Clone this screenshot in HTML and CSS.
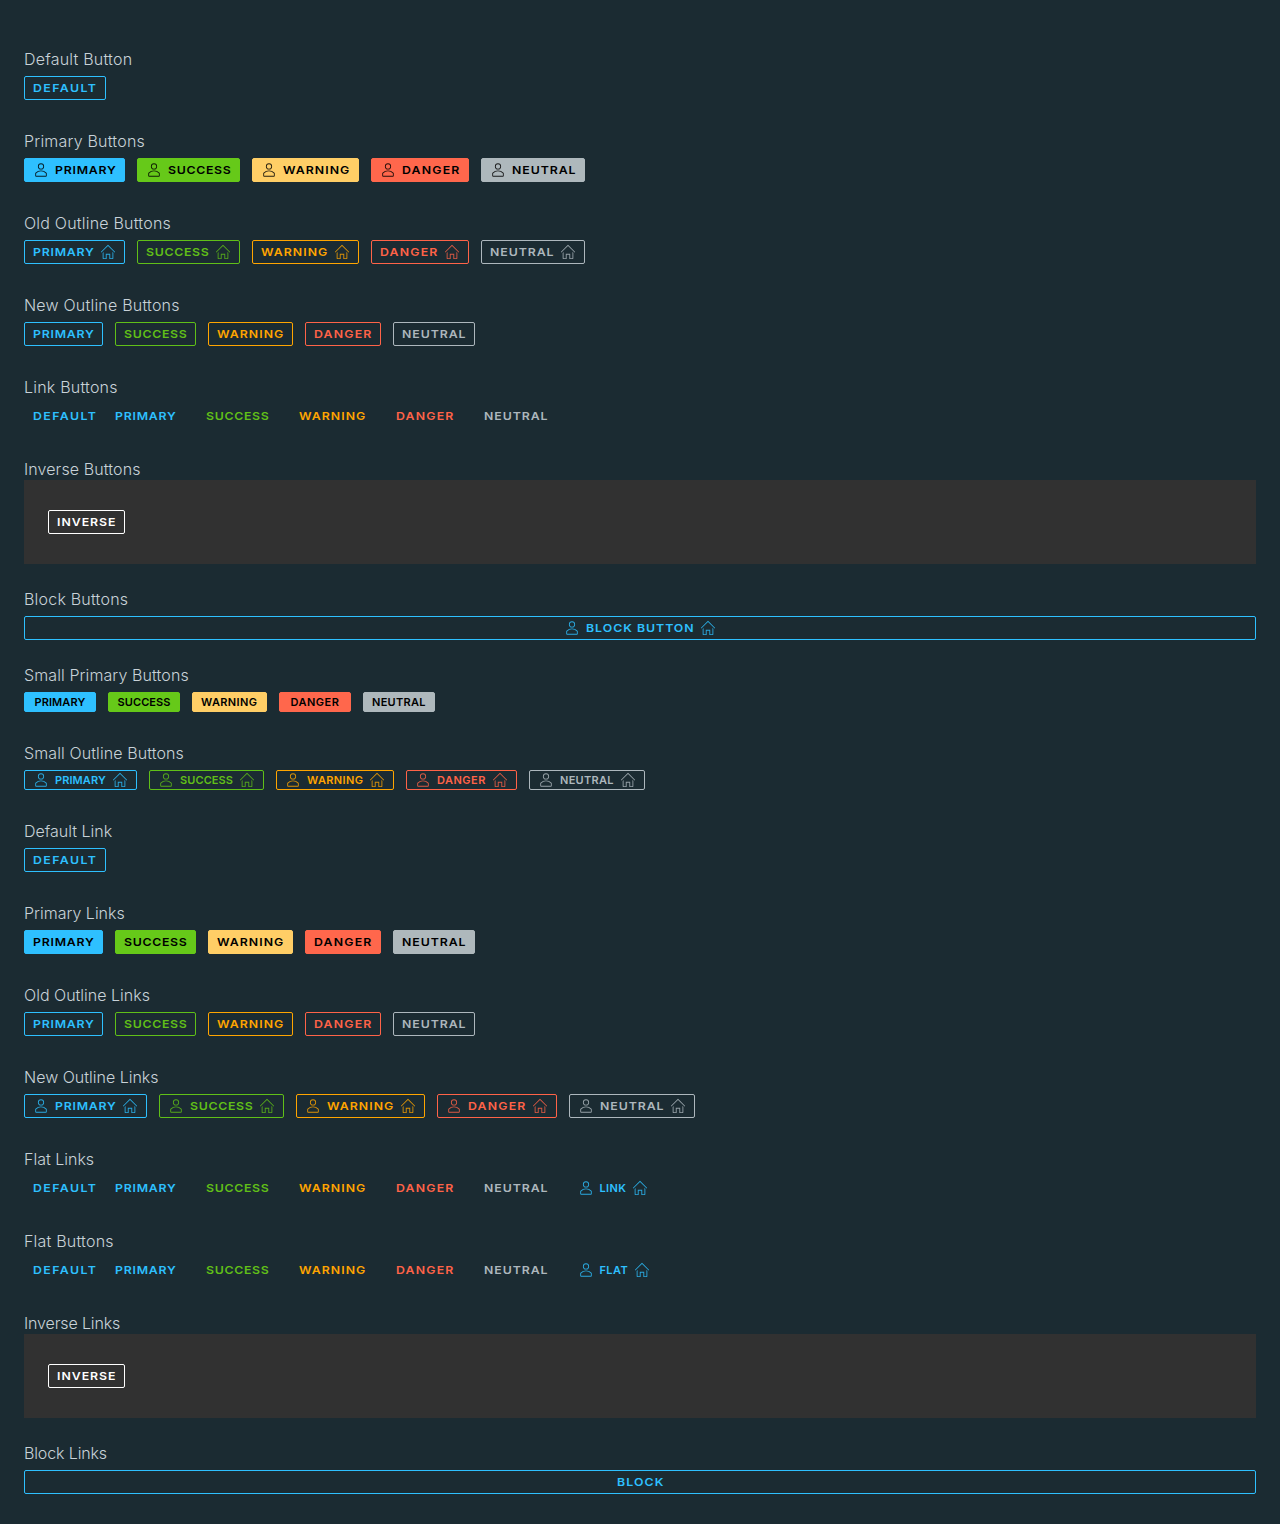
FILE: index.html
```html
<!DOCTYPE html>
<html lang="en">
<head>
<meta charset="utf-8">
<title>Buttons</title>
<link rel="stylesheet" href="styles.css">
</head>
<body>
<svg class="sprite" aria-hidden="true">
  <symbol id="user" viewBox="0 0 36 36"><path d="M18,17a7,7,0,1,0-7-7A7,7,0,0,0,18,17ZM18,5a5,5,0,1,1-5,5A5,5,0,0,1,18,5Z"/><path d="M30.47,24.37a17.16,17.16,0,0,0-24.93,0A2,2,0,0,0,5,25.74V31a2,2,0,0,0,2,2H29a2,2,0,0,0,2-2V25.74A2,2,0,0,0,30.47,24.37ZM29,31H7V25.73a15.17,15.17,0,0,1,22,0h0Z"/></symbol>
  <symbol id="home" viewBox="0 0 36 36"><path d="M33.71,17.29l-15-15a1,1,0,0,0-1.41,0l-15,15a1,1,0,0,0,1.41,1.41L18,4.41,32.29,18.71a1,1,0,0,0,1.41-1.41Z"/><path d="M28,32h-5V22H13V32H8V18L6,20V32a2,2,0,0,0,2,2h7V24h6V34h7a2,2,0,0,0,2-2V19.76l-2-2Z"/></symbol>
</svg>
<main>
<section>
  <h4>Default Button</h4>
  <div class="row"><button class="btn"><span class="t default">Default</span></button></div>
</section>
<section>
  <h4>Primary Buttons</h4>
  <div class="row solid">
    <button class="btn c-primary"><svg><use href="#user"/></svg><span class="t primary">Primary</span></button>
    <button class="btn c-success"><svg><use href="#user"/></svg><span class="t success">Success</span></button>
    <button class="btn c-warning"><svg><use href="#user"/></svg><span class="t warning">Warning</span></button>
    <button class="btn c-danger"><svg><use href="#user"/></svg><span class="t danger">Danger</span></button>
    <button class="btn c-neutral"><svg><use href="#user"/></svg><span class="t neutral">Neutral</span></button>
  </div>
</section>
<section>
  <h4>Old Outline Buttons</h4>
  <div class="row">
    <button class="btn c-primary"><span class="t primary">Primary</span><svg><use href="#home"/></svg></button>
    <button class="btn c-success"><span class="t success">Success</span><svg><use href="#home"/></svg></button>
    <button class="btn c-warning"><span class="t warning">Warning</span><svg><use href="#home"/></svg></button>
    <button class="btn c-danger"><span class="t danger">Danger</span><svg><use href="#home"/></svg></button>
    <button class="btn c-neutral"><span class="t neutral">Neutral</span><svg><use href="#home"/></svg></button>
  </div>
</section>
<section>
  <h4>New Outline Buttons</h4>
  <div class="row">
    <button class="btn c-primary"><span class="t primary">Primary</span></button>
    <button class="btn c-success"><span class="t success">Success</span></button>
    <button class="btn c-warning"><span class="t warning">Warning</span></button>
    <button class="btn c-danger"><span class="t danger">Danger</span></button>
    <button class="btn c-neutral"><span class="t neutral">Neutral</span></button>
  </div>
</section>
<section>
  <h4>Link Buttons</h4>
  <div class="row flat">
    <button class="btn"><span class="t default">Default</span></button>
    <button class="btn c-primary"><span class="t primary">Primary</span></button>
    <button class="btn c-success"><span class="t success">Success</span></button>
    <button class="btn c-warning"><span class="t warning">Warning</span></button>
    <button class="btn c-danger"><span class="t danger">Danger</span></button>
    <button class="btn c-neutral"><span class="t neutral">Neutral</span></button>
  </div>
</section>
<section class="tight snug">
  <h4>Inverse Buttons</h4>
  <div class="panel"><button class="btn c-inverse"><span class="t inverse">Inverse</span></button></div>
</section>
<section class="tight">
  <h4>Block Buttons</h4>
  <button class="btn block"><svg><use href="#user"/></svg><span class="t block-button">Block Button</span><svg><use href="#home"/></svg></button>
</section>
<section class="snug">
  <h4>Small Primary Buttons</h4>
  <div class="row solid small">
    <button class="btn c-primary"><span class="t primary">Primary</span></button>
    <button class="btn c-success"><span class="t success">Success</span></button>
    <button class="btn c-warning"><span class="t warning">Warning</span></button>
    <button class="btn c-danger"><span class="t danger">Danger</span></button>
    <button class="btn c-neutral"><span class="t neutral">Neutral</span></button>
  </div>
</section>
<section class="snug">
  <h4>Small Outline Buttons</h4>
  <div class="row small">
    <button class="btn c-primary"><svg><use href="#user"/></svg><span class="t primary">Primary</span><svg><use href="#home"/></svg></button>
    <button class="btn c-success"><svg><use href="#user"/></svg><span class="t success">Success</span><svg><use href="#home"/></svg></button>
    <button class="btn c-warning"><svg><use href="#user"/></svg><span class="t warning">Warning</span><svg><use href="#home"/></svg></button>
    <button class="btn c-danger"><svg><use href="#user"/></svg><span class="t danger">Danger</span><svg><use href="#home"/></svg></button>
    <button class="btn c-neutral"><svg><use href="#user"/></svg><span class="t neutral">Neutral</span><svg><use href="#home"/></svg></button>
  </div>
</section>
<section class="links">
  <h4>Default Link</h4>
  <div class="row"><a class="btn" href="#"><span class="t default">Default</span></a></div>
</section>
<section class="links">
  <h4>Primary Links</h4>
  <div class="row solid">
    <a class="btn c-primary" href="#"><span class="t primary">Primary</span></a>
    <a class="btn c-success" href="#"><span class="t success">Success</span></a>
    <a class="btn c-warning" href="#"><span class="t warning">Warning</span></a>
    <a class="btn c-danger" href="#"><span class="t danger">Danger</span></a>
    <a class="btn c-neutral" href="#"><span class="t neutral">Neutral</span></a>
  </div>
</section>
<section class="links">
  <h4>Old Outline Links</h4>
  <div class="row">
    <a class="btn c-primary" href="#"><span class="t primary">Primary</span></a>
    <a class="btn c-success" href="#"><span class="t success">Success</span></a>
    <a class="btn c-warning" href="#"><span class="t warning">Warning</span></a>
    <a class="btn c-danger" href="#"><span class="t danger">Danger</span></a>
    <a class="btn c-neutral" href="#"><span class="t neutral">Neutral</span></a>
  </div>
</section>
<section class="links">
  <h4>New Outline Links</h4>
  <div class="row">
    <a class="btn c-primary" href="#"><svg><use href="#user"/></svg><span class="t primary">Primary</span><svg><use href="#home"/></svg></a>
    <a class="btn c-success" href="#"><svg><use href="#user"/></svg><span class="t success">Success</span><svg><use href="#home"/></svg></a>
    <a class="btn c-warning" href="#"><svg><use href="#user"/></svg><span class="t warning">Warning</span><svg><use href="#home"/></svg></a>
    <a class="btn c-danger" href="#"><svg><use href="#user"/></svg><span class="t danger">Danger</span><svg><use href="#home"/></svg></a>
    <a class="btn c-neutral" href="#"><svg><use href="#user"/></svg><span class="t neutral">Neutral</span><svg><use href="#home"/></svg></a>
  </div>
</section>
<section class="links">
  <h4>Flat Links</h4>
  <div class="row flat">
    <a class="btn" href="#"><span class="t default">Default</span></a>
    <a class="btn c-primary" href="#"><span class="t primary">Primary</span></a>
    <a class="btn c-success" href="#"><span class="t success">Success</span></a>
    <a class="btn c-warning" href="#"><span class="t warning">Warning</span></a>
    <a class="btn c-danger" href="#"><span class="t danger">Danger</span></a>
    <a class="btn c-neutral" href="#"><span class="t neutral">Neutral</span></a>
    <a class="btn" href="#"><svg><use href="#user"/></svg><span class="t link">Link</span><svg><use href="#home"/></svg></a>
  </div>
</section>
<section>
  <h4>Flat Buttons</h4>
  <div class="row flat">
    <button class="btn"><span class="t default">Default</span></button>
    <button class="btn c-primary"><span class="t primary">Primary</span></button>
    <button class="btn c-success"><span class="t success">Success</span></button>
    <button class="btn c-warning"><span class="t warning">Warning</span></button>
    <button class="btn c-danger"><span class="t danger">Danger</span></button>
    <button class="btn c-neutral"><span class="t neutral">Neutral</span></button>
    <button class="btn"><svg><use href="#user"/></svg><span class="t flat-label">Flat</span><svg><use href="#home"/></svg></button>
  </div>
</section>
<section class="tight narrow">
  <h4>Inverse Links</h4>
  <div class="panel"><a class="btn c-inverse" href="#"><span class="t inverse">Inverse</span></a></div>
</section>
<section class="narrow">
  <h4>Block Links</h4>
  <a class="btn block" href="#"><span class="t block-link">Block</span></a>
</section>
</main>
</body>
</html>
```
FILE: styles.css
```css
* { box-sizing: border-box; }

body {
  margin: 0;
  background: #1b2b32;
  font-family: Inter, "Liberation Sans", sans-serif;
}

.sprite { display: none; }

main { padding: 47px 24px 0; }

section { padding-bottom: 29px; }
section.tight { padding-bottom: 23px; }

h4 {
  margin: 0 0 5px;
  color: #c8d2d8;
  font-size: 16px;
  font-weight: 300;
  line-height: 24px;
  letter-spacing: 0.21px;
}
.snug h4 { letter-spacing: 0.1px; }
.links h4 { letter-spacing: 0; }
.narrow h4 { letter-spacing: -0.13px; }

.row { display: flex; gap: 12px; }
.flat .btn:first-child { margin-right: -12.5px; }

.btn {
  --c: #2ec0ff;
  --fill: #2ec0ff;
  display: flex;
  align-items: center;
  justify-content: center;
  gap: 6px;
  height: 24px;
  padding: 0 8px;
  border: 1px solid var(--c);
  border-radius: 2px;
  background: none;
  color: var(--c);
  font: 600 11px/22px Inter, "Liberation Sans", sans-serif;
  text-decoration: none;
  text-transform: uppercase;
  white-space: nowrap;
}
.btn svg {
  flex: none;
  width: 16px;
  height: 16px;
  fill: currentColor;
  opacity: 0.85;
}

.c-success { --c: #60bf18; --fill: #66c919; }
.c-warning { --c: #ffa500; --fill: #ffce66; }
.c-danger { --c: #ff6348; --fill: #ff674c; }
.c-neutral { --c: #adb7bd; --fill: #aeb8bc; }
.c-inverse { --c: #fff; }

.solid .btn {
  border-color: var(--fill);
  background: var(--fill);
  color: #000;
}
.flat .btn { border-color: transparent; }
.block { width: 100%; }

.panel {
  display: flex;
  align-items: center;
  height: 84px;
  margin-top: -6px;
  padding: 0 24px;
  background: #313131;
}
section.tight:has(.panel) { padding-bottom: 23px; }

/* Label boxes and tracking; regular-size labels are set extended */
.t {
  flex: none;
  text-align: left;
  transform: scaleX(1.12);
  transform-origin: left center;
}
.default { width: 64px; letter-spacing: 1.27px; }
.primary { width: 61px; letter-spacing: 0.68px; }
.success { width: 63px; letter-spacing: 0.6px; }
.warning { width: 67px; letter-spacing: 0.93px; }
.danger { width: 58px; letter-spacing: 1.05px; }
.neutral { width: 64px; letter-spacing: 0.83px; }
.inverse { width: 59px; letter-spacing: 0.87px; }
.block-button { width: 108px; letter-spacing: 0.87px; }
.block-link { width: 47px; letter-spacing: 0.97px; }
.link { width: 26.5px; letter-spacing: 0.4px; transform: none; }
.flat-label { width: 28.5px; letter-spacing: 0.4px; transform: none; }

.small .btn { height: 20px; min-width: 72px; line-height: 18px; }
.small .t { transform: none; }
.small .primary { width: 51px; letter-spacing: 0.1px; }
.small .success { width: 53px; letter-spacing: 0.1px; }
.small .warning { width: 56px; letter-spacing: 0.4px; }
.small .danger { width: 49px; letter-spacing: 0.5px; }
.small .neutral { width: 54px; letter-spacing: 0.3px; }
.small.solid .warning { width: 57px; }
```
